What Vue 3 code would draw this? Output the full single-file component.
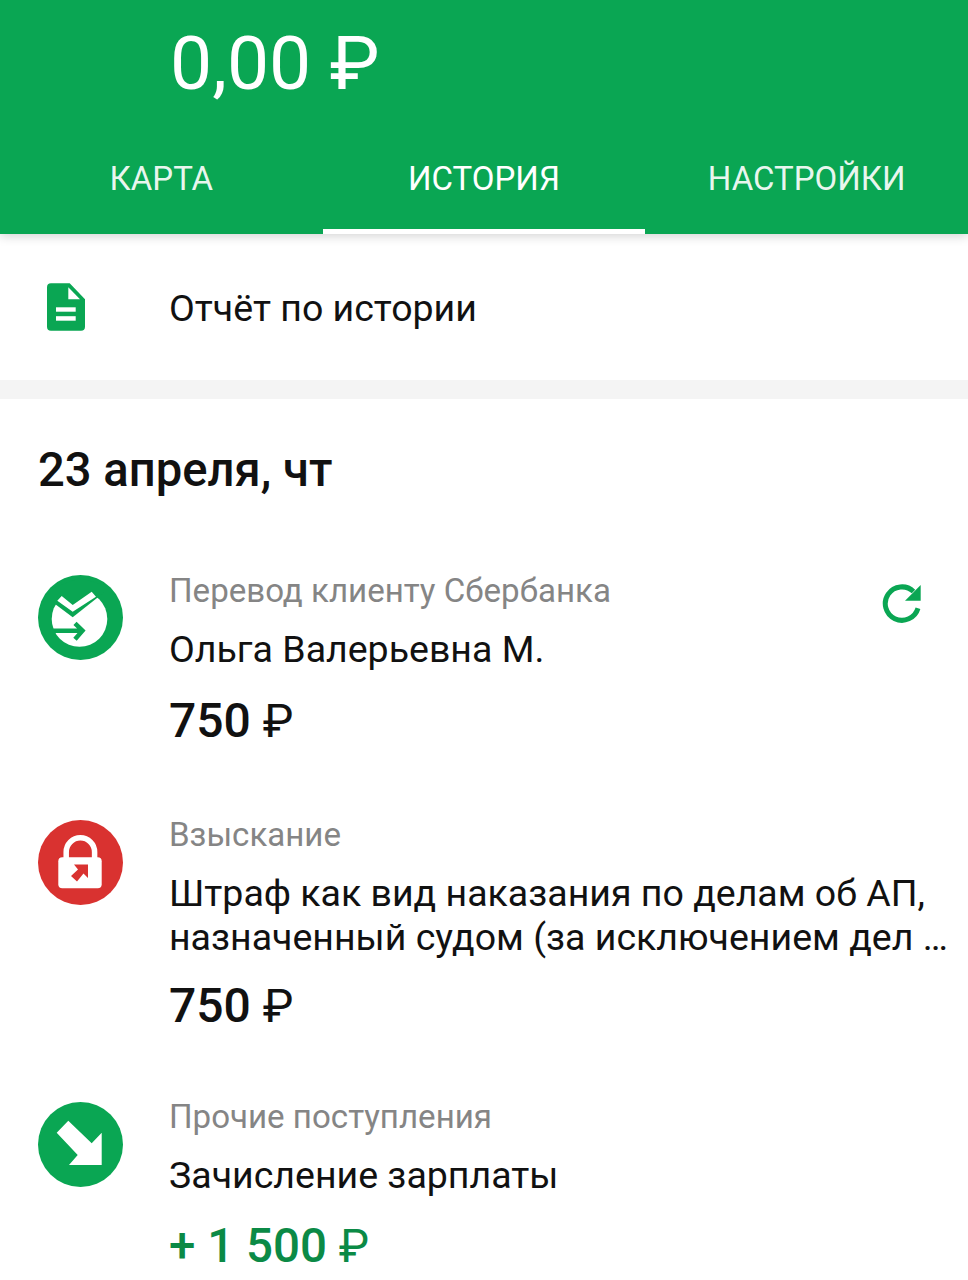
<script setup>
const tabs = [
  { label: 'КАРТА', active: false },
  { label: 'ИСТОРИЯ', active: true },
  { label: 'НАСТРОЙКИ', active: false }
]
</script>

<template>
  <div class="screen">
    <header class="header">
      <div class="balance">0,00 ₽</div>
      <nav class="tabs">
        <div v-for="tab in tabs" :key="tab.label" class="tab" :class="{ active: tab.active }">{{ tab.label }}</div>
      </nav>
    </header>

    <div class="report">
      <svg class="report-icon" width="38" height="48" viewBox="0 0 38 48">
        <path fill="#0aa653" d="M4 .3h18.700L38 16.300V43.700a4 4 0 0 1-4 4H4a4 4 0 0 1-4-4V4.300a4 4 0 0 1 4-4z" />
        <path fill="#fff" d="M21.300 4.300v12H33z" />
        <rect x="9" y="24.300" width="19.700" height="4.400" fill="#fff" />
        <rect x="9" y="33.200" width="19.700" height="4.500" fill="#fff" />
      </svg>
      <span class="report-text">Отчёт по истории</span>
    </div>

    <div class="divider"></div>

    <h2 class="date">23 апреля, чт</h2>

    <section class="op op-first">
      <svg class="op-icon" width="85" height="85" viewBox="0 0 85 85">
        <circle cx="42.500" cy="42.500" r="42.500" fill="#0aa653" />
        <circle cx="41.500" cy="44" r="27.800" fill="#fff" />
        <path fill="#0aa653" d="M12 25.300V14L42 3l24 7v7.600L34.700 42.300z" />
        <path fill="#fff" d="M23.700 21l11 9 19-13.300 4.300 5-23.300 15-15.400-11z" />
        <path fill="none" stroke="#0aa653" stroke-width="4.500" d="M15 55.700h28M37 48.300l7.500 7.400-7.500 8.600" />
      </svg>
      <div class="op-body">
        <div class="op-type">Перевод клиенту Сбербанка</div>
        <div class="op-title">Ольга Валерьевна М.</div>
        <div class="op-sum">750 <span class="rub">₽</span></div>
      </div>
      <svg class="repeat" width="40" height="40" viewBox="0 0 40 40">
        <path fill="none" stroke="#0aa653" stroke-width="5" d="M36 25.300A16.700 16.700 0 1 1 31.500 8.500" />
        <path fill="#0aa653" d="M38.700 2v15.700H23z" />
      </svg>
    </section>

    <section class="op op-second">
      <svg class="op-icon" width="85" height="85" viewBox="0 0 85 85">
        <circle cx="42.500" cy="42.500" r="42.500" fill="#d93230" />
        <path fill="none" stroke="#fff" stroke-width="5.500" d="M28.200 38V32a14.200 14.200 0 0 1 28.400 0v6" />
        <rect x="20.300" y="37.300" width="43.400" height="31" rx="4" fill="#fff" />
        <path fill="#d93230" d="M36 44.500h14v13.500L45.500 53.500l-6.500 8-6-5.500 7-6.500z" />
      </svg>
      <div class="op-body">
        <div class="op-type">Взыскание</div>
        <div class="op-title two-lines">Штраф как вид наказания по делам об АП,<br />назначенный судом (за исключением дел …</div>
        <div class="op-sum">750 <span class="rub">₽</span></div>
      </div>
    </section>

    <section class="op op-third">
      <svg class="op-icon" width="85" height="85" viewBox="0 0 85 85">
        <circle cx="42.500" cy="42.500" r="42.500" fill="#0aa653" />
        <path fill="#fff" d="M30.300 18.700L18.700 30.700 39.700 53 31 63H63.700V30.700L53.700 41.300z" />
      </svg>
      <div class="op-body">
        <div class="op-type">Прочие поступления</div>
        <div class="op-title">Зачисление зарплаты</div>
        <div class="op-sum income">+ 1 500 <span class="rub">₽</span></div>
      </div>
    </section>
  </div>
</template>

<style scoped>
.screen {
  width: 968px;
  height: 1280px;
  overflow: hidden;
  background: #fff;
  font-family: Roboto, "Liberation Sans", sans-serif;
}

.header {
  height: 234px;
  background: #0aa653;
  color: #fff;
  display: flex;
  flex-direction: column;
  box-shadow: 0 2px 10px rgba(0, 0, 0, 0.18);
  position: relative;
}

.balance {
  margin: 21px 0 0 170px;
  height: 84px;
  line-height: 84px;
  font-size: 75px;
  font-weight: 400;
}

.tabs {
  margin-top: auto;
  display: grid;
  grid-template-columns: repeat(3, 1fr);
}

.tab {
  height: 92px;
  padding-bottom: 19px;
  box-sizing: border-box;
  display: flex;
  align-items: center;
  justify-content: center;
  font-size: 33px;
  color: rgba(255, 255, 255, 0.92);
}

.tab.active {
  color: #fff;
  border-bottom: 5px solid #fff;
  padding-bottom: 14px;
}

.report {
  height: 146px;
  display: flex;
  align-items: center;
  padding-left: 47px;
  box-sizing: border-box;
}

.report-icon {
  flex: none;
}

.report-text {
  margin: 2px 0 0 84px;
  font-size: 37.500px;
  color: #111;
}

.divider {
  height: 19px;
  background: #f4f4f4;
}

.date {
  margin: 43px 0 0 38px;
  font-size: 47.200px;
  line-height: 56px;
  font-weight: 500;
  color: #111;
}

.op {
  display: flex;
  padding-left: 38px;
}

.op-first {
  margin-top: 75px;
}

.op-second {
  margin-top: 68px;
}

.op-third {
  margin-top: 65px;
}

.op-icon {
  flex: none;
  margin-top: 3px;
}

.op-first .op-icon {
  margin-top: 2px;
}

.op-body {
  margin-left: 46px;
  flex: 1;
  margin-top: -2px;
}

.op-type {
  font-size: 33.100px;
  line-height: 40px;
  color: #858585;
}

.op-title {
  margin-top: 16px;
  font-size: 37.500px;
  line-height: 44px;
  color: #111;
  white-space: nowrap;
}

.op-sum {
  margin-top: 22px;
  font-size: 48px;
  line-height: 56px;
  font-weight: 500;
  color: #111;
}

.rub {
  font-weight: 400;
  font-size: 0.96em;
}

.op-second .op-sum {
  margin-top: 19px;
}

.op-third .op-sum {
  margin-top: 21px;
}

.op-sum.income {
  font-size: 47.500px;
  color: #0b8a46;
}

.repeat {
  flex: none;
  margin: 10px 46px 0 0;
}
</style>

<style>
body {
  background: #fff;
}
</style>
